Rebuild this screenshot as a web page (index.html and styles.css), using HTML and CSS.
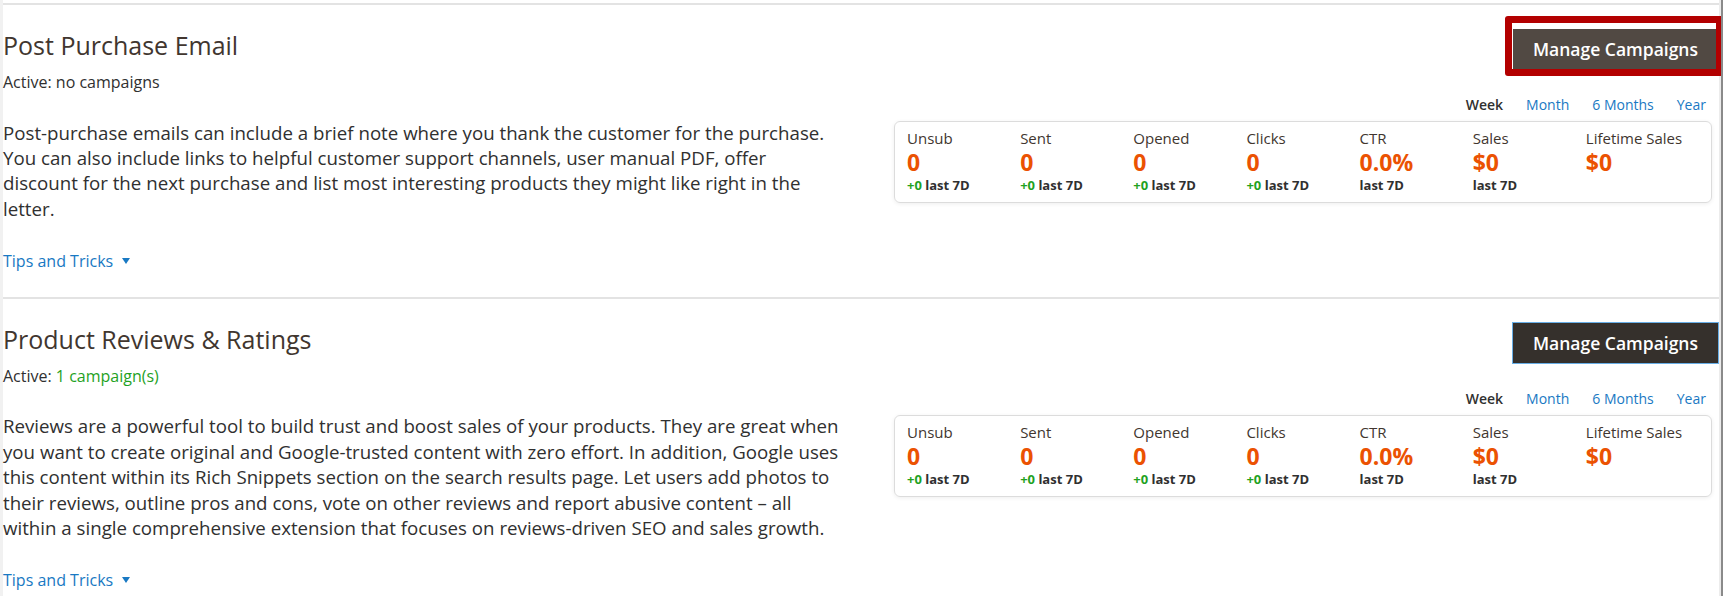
FILE: index.html
```html
<!DOCTYPE html>
<html lang="en">
<head>
    <meta charset="UTF-8">
    <meta name="viewport" content="width=device-width, initial-scale=1.0">
    <title>Marketing Modules</title>
    <link rel="stylesheet" href="styles.css">
</head>
<body>
<div class="frame">
    <div class="page">

        <section class="module">
            <div class="module-info">
                <h2 class="module-title">Post Purchase Email</h2>
                <div class="module-status">Active: no campaigns</div>
                <p class="module-desc">Post-purchase emails can include a brief note where you thank the customer for the purchase. You can also include links to helpful customer support channels, user manual PDF, offer discount for the next purchase and list most interesting products they might like right in the letter.</p>
                <a class="tips" href="#">Tips and Tricks</a>
            </div>
            <div class="module-stats">
                <div class="actions">
                    <button class="btn-manage marked">Manage Campaigns</button>
                </div>
                <ul class="periods">
                    <li class="current">Week</li>
                    <li><a href="#">Month</a></li>
                    <li><a href="#">6 Months</a></li>
                    <li><a href="#">Year</a></li>
                </ul>
                <div class="stats-card">
                    <div class="stat"><div class="stat-label">Unsub</div><div class="stat-value">0</div><div class="stat-delta"><span class="plus">+0</span> last 7D</div></div>
                    <div class="stat"><div class="stat-label">Sent</div><div class="stat-value">0</div><div class="stat-delta"><span class="plus">+0</span> last 7D</div></div>
                    <div class="stat"><div class="stat-label">Opened</div><div class="stat-value">0</div><div class="stat-delta"><span class="plus">+0</span> last 7D</div></div>
                    <div class="stat"><div class="stat-label">Clicks</div><div class="stat-value">0</div><div class="stat-delta"><span class="plus">+0</span> last 7D</div></div>
                    <div class="stat"><div class="stat-label">CTR</div><div class="stat-value">0.0%</div><div class="stat-delta">last 7D</div></div>
                    <div class="stat"><div class="stat-label">Sales</div><div class="stat-value">$0</div><div class="stat-delta">last 7D</div></div>
                    <div class="stat"><div class="stat-label">Lifetime Sales</div><div class="stat-value">$0</div></div>
                </div>
            </div>
        </section>

        <section class="module">
            <div class="module-info">
                <h2 class="module-title">Product Reviews &amp; Ratings</h2>
                <div class="module-status">Active: <span class="on">1 campaign(s)</span></div>
                <p class="module-desc">Reviews are a powerful tool to build trust and boost sales of your products. They are great when you want to create original and Google-trusted content with zero effort. In addition, Google uses this content within its Rich Snippets section on the search results page. Let users add photos to their reviews, outline pros and cons, vote on other reviews and report abusive content &ndash; all within a single comprehensive extension that focuses on reviews-driven SEO and sales growth.</p>
                <a class="tips" href="#">Tips and Tricks</a>
            </div>
            <div class="module-stats">
                <div class="actions">
                    <button class="btn-manage focused">Manage Campaigns</button>
                </div>
                <ul class="periods">
                    <li class="current">Week</li>
                    <li><a href="#">Month</a></li>
                    <li><a href="#">6 Months</a></li>
                    <li><a href="#">Year</a></li>
                </ul>
                <div class="stats-card">
                    <div class="stat"><div class="stat-label">Unsub</div><div class="stat-value">0</div><div class="stat-delta"><span class="plus">+0</span> last 7D</div></div>
                    <div class="stat"><div class="stat-label">Sent</div><div class="stat-value">0</div><div class="stat-delta"><span class="plus">+0</span> last 7D</div></div>
                    <div class="stat"><div class="stat-label">Opened</div><div class="stat-value">0</div><div class="stat-delta"><span class="plus">+0</span> last 7D</div></div>
                    <div class="stat"><div class="stat-label">Clicks</div><div class="stat-value">0</div><div class="stat-delta"><span class="plus">+0</span> last 7D</div></div>
                    <div class="stat"><div class="stat-label">CTR</div><div class="stat-value">0.0%</div><div class="stat-delta">last 7D</div></div>
                    <div class="stat"><div class="stat-label">Sales</div><div class="stat-value">$0</div><div class="stat-delta">last 7D</div></div>
                    <div class="stat"><div class="stat-label">Lifetime Sales</div><div class="stat-value">$0</div></div>
                </div>
            </div>
        </section>

    </div>
</div>
</body>
</html>
```

FILE: styles.css
```css
body{
    margin: 0;
    background-color: #fff;
    font-family: "Open Sans", "Noto Sans", sans-serif;
    color: #303030;
}
.frame{
    border-right: 2px solid #8a8a8a;
    margin-right: 3px;
    height: 596px;
    overflow: hidden;
}
.page{
    border-left: 3px solid #f1f1f1;
    border-right: 2px solid #ececec;
    padding-top: 3px;
    height: 100%;
}
.module{
    display: flex;
    border-top: 2px solid #e3e3e3;
    padding: 25px 0 22px 0;
}
.module-info{
    flex: 0 0 858px;
    box-sizing: border-box;
    padding-right: 17px;
}
.module-title{
    margin: 0 0 10px 0;
    font-size: 25px;
    line-height: 30px;
    font-weight: 400;
    color: #41362f;
}
.module-status{
    font-size: 16px;
    line-height: 25.6px;
}
.module-status .on{
    color: #1fa21f;
}
.module-desc{
    margin: 24px 0 28px 0;
    font-size: 18.7px;
    line-height: 25.4px;
}
.tips{
    display: inline-block;
    font-size: 16px;
    line-height: 25.6px;
    color: #1979c3;
    text-decoration: none;
}
.tips::after{
    content: "";
    display: inline-block;
    margin-left: 9px;
    vertical-align: 3px;
    border-left: 4.5px solid transparent;
    border-right: 4.5px solid transparent;
    border-top: 6px solid #1979c3;
}
.module-stats{
    flex: 1;
    display: flex;
    flex-direction: column;
}
.actions{
    display: flex;
    justify-content: flex-end;
    margin-top: -1px;
}
.btn-manage{
    position: relative;
    font-family: "Open Sans", "Noto Sans", sans-serif;
    font-size: 17.5px;
    line-height: 24px;
    font-weight: 600;
    color: #fff;
    background-color: #514943;
    border: 1px solid #514943;
    padding: 7px 19px;
    margin-right: 1px;
    cursor: pointer;
}
.btn-manage.focused{
    background-color: #35302c;
    border-color: #35302c;
    box-shadow: 0 0 0 1px #68aee6;
}
.btn-manage.marked::before{
    content: "";
    position: absolute;
    top: -14px;
    left: -9px;
    right: -6px;
    bottom: -8px;
    border: 7px solid #b30000;
    border-radius: 3px;
}
.periods{
    display: flex;
    justify-content: flex-end;
    gap: 23px;
    list-style: none;
    margin: 26px 0 0 0;
    padding: 0 13px 0 0;
    font-size: 14px;
    line-height: 20px;
}
.periods a{
    color: #1979c3;
    text-decoration: none;
}
.periods .current{
    font-weight: 600;
    color: #303030;
}
.stats-card{
    display: grid;
    grid-template-columns: repeat(7, 1fr);
    margin: 6px 7px 0 33px;
    padding: 6px 12px 8px 12px;
    border: 1px solid #dcdcdc;
    border-radius: 6px;
    box-shadow: 0 1px 4px rgba(0, 0, 0, 0.07);
}
.stat-label{
    font-size: 15px;
    line-height: 20px;
    color: #41362f;
}
.stat-value{
    font-size: 23px;
    line-height: 28px;
    font-weight: 700;
    color: #eb5202;
}
.stat-delta{
    font-size: 13px;
    line-height: 18px;
    font-weight: 700;
    color: #303030;
}
.stat-delta .plus{
    color: #1fa21f;
}
```
